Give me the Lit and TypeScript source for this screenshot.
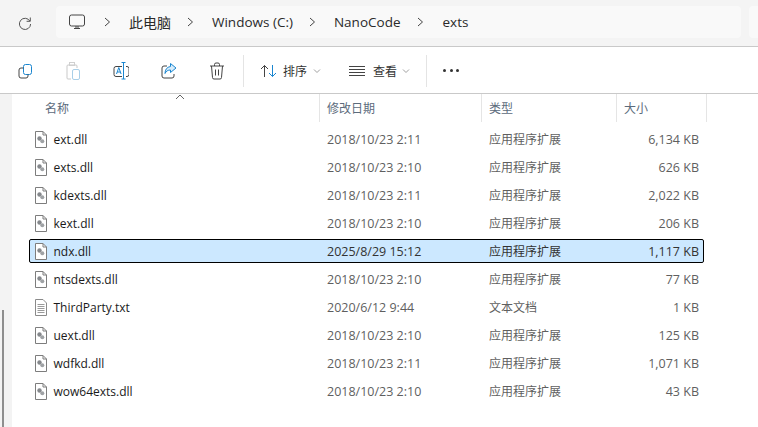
import { LitElement, html, css } from "lit";
import { customElement } from "lit/decorators.js";

const rows = [
  ["ext.dll", "2018/10/23 2:11", "应用程序扩展", "6,134 KB"],
  ["exts.dll", "2018/10/23 2:10", "应用程序扩展", "626 KB"],
  ["kdexts.dll", "2018/10/23 2:11", "应用程序扩展", "2,022 KB"],
  ["kext.dll", "2018/10/23 2:10", "应用程序扩展", "206 KB"],
  ["ndx.dll", "2025/8/29 15:12", "应用程序扩展", "1,117 KB"],
  ["ntsdexts.dll", "2018/10/23 2:10", "应用程序扩展", "77 KB"],
  ["ThirdParty.txt", "2020/6/12 9:44", "文本文档", "1 KB"],
  ["uext.dll", "2018/10/23 2:10", "应用程序扩展", "125 KB"],
  ["wdfkd.dll", "2018/10/23 2:11", "应用程序扩展", "1,071 KB"],
  ["wow64exts.dll", "2018/10/23 2:10", "应用程序扩展", "43 KB"],
];

const chev = html`<svg class="chev" width="8" height="12" viewBox="0 0 8 12"><path d="M2 2l4.500 4L2 10" fill="none" stroke="#444" stroke-width="1"/></svg>`;
const down = html`<svg class="down" width="8" height="6" viewBox="0 0 8 6"><path d="M1 1.500l3 3 3-3" fill="none" stroke="#a0a0a0" stroke-width="1"/></svg>`;

const dllIcon = html`<svg class="fi" width="14" height="17" viewBox="0 0 14 17">
  <path d="M1.500.5h7.500l3.500 3.500v12.500h-11z" fill="#fff" stroke="#7d7d7d"/>
  <path d="M9 .5v3.500h3.500" fill="none" stroke="#7d7d7d"/>
  <circle cx="5.500" cy="7.500" r="2.200" fill="#85888c"/><circle cx="8.300" cy="10.300" r="2" fill="#9fa2a5"/>
</svg>`;
const txtIcon = html`<svg class="fi" width="14" height="17" viewBox="0 0 14 17">
  <path d="M1.500.5h7.500l3.500 3.500v12.500h-11z" fill="#fff" stroke="#8a8a8a"/>
  <path d="M3.500 5.500h7M3.500 7.500h7M3.500 9.500h7M3.500 11.500h7M3.500 13.500h7" stroke="#9a9a9a"/>
</svg>`;

@customElement("app-root")
export class AppRoot extends LitElement {
  static styles = css`
    :host { display: block; width: 758px; height: 427px; overflow: hidden; background: #fff;
      font-family: "Open Sans", "Noto Sans CJK SC", sans-serif; font-size: 12.500px; color: #1b1b1b; }
    * { box-sizing: border-box; }
    .top { height: 47px; background: #f4f4f4; border-bottom: 1px solid #c9c9c9; display: flex; padding: 6px 0 0 18px; }
    .refresh { width: 38px; height: 32px; display: flex; align-items: center; padding-top: 2px; }
    .addr { width: 685px; height: 32px; background: #f9f9f9; border-radius: 4px; display: flex; align-items: center; padding-left: 13px; font-size: 13.500px; color: #2a2a2a; }
    .addr .pc { margin-right: 18px; }
    .addr .chev { margin-right: 18px; }
    .addr .seg { margin-right: 15px; }
    .addr .seg.wide { margin-right: 16px; }
    .addr .cjk { font-size: 14px; }
    .search { margin-left: 8px; flex: 1; height: 32px; background: #f9f9f9; border-radius: 4px 0 0 4px; }
    .bar { height: 47px; border-bottom: 1px solid #c9c9c9; display: flex; align-items: center; padding: 1px 0 0 17px; color: #333; }
    .ib { width: 16px; height: 18px; margin-right: 32px; display: flex; }
    .ib.last { margin-right: 18px; }
    .sep { width: 1px; height: 32px; background: #e4e4e4; margin-right: 16px; }
    .tb { display: flex; align-items: center; font-size: 12px; }
    .tb.sort-btn { margin-right: 28px; }
    .tb.view-btn { margin-right: 16px; }
    .tb .lbl { margin: 0 5px 0 8px; }
    .tb.sort-btn .lbl { margin: 0 6px; }
    .dots { display: flex; gap: 3.500px; }
    .dots i { width: 3px; height: 3px; border-radius: 50%; background: #333; }
    .main { display: flex; height: 333px; }
    .side { width: 12px; background: #f3f3f3; display: flex; flex-direction: column; justify-content: flex-end; padding-left: 2px; }
    .thumb { width: 2px; height: 117px; background: #8e8e8e; }
    .list { flex: 1; min-width: 0; }
    .head { height: 28px; display: grid; grid-template-columns: 308px 162px 135px 90px; position: relative; color: #5c6b7c; font-size: 12px; }
    .head div { border-right: 1px solid #e5e5e5; padding: 5px 0 0 7px; }
    .head div:first-child { padding-left: 33px; }
    .sort { position: absolute; left: 163px; top: 0; }
    .rows { display: flex; flex-direction: column; gap: 4px; padding: 5px 0 0 17px; }
    .row { height: 24px; width: 675px; display: grid; grid-template-columns: 291px 162px 135px 85px; align-items: center; border: 1px solid transparent; }
    .row.sel { background: #cce8ff; border-color: #000; border-radius: 2px; }
    .name { display: flex; align-items: center; gap: 5.500px; padding-left: 4px; color: #1a1a1a; font-size: 12px; }
    .fi { flex: none; }
    .date, .type, .size { color: #5f5f5f; }
    .sel .date, .sel .type, .sel .size { color: #333; }
    .date { padding-left: 6px; }
    .type { padding-left: 6px; font-size: 12px; }
    .size { text-align: right; padding-right: 4px; }
  `;

  render() {
    return html`
      <div class="top">
        <div class="refresh"><svg width="14" height="14" viewBox="0 0 14 14"><path d="M11.800 5A5.600 5.600 0 1 0 12.600 8" fill="none" stroke="#555" stroke-width="1"/><path d="M12.300 1.500V5.300H8.600" fill="none" stroke="#555" stroke-width="1"/></svg></div>
        <div class="addr">
          <svg class="pc" width="16" height="16" viewBox="0 0 16 16"><rect x=".5" y="1" width="15" height="11" rx="2" fill="none" stroke="#444"/><path d="M5 14.500h6M7 12v2M9 12v2" stroke="#444"/></svg>
          ${chev}<span class="seg cjk">此电脑</span>${chev}<span class="seg">Windows (C:)</span>${chev}<span class="seg wide">NanoCode</span>${chev}<span>exts</span>
        </div>
        <div class="search"></div>
      </div>
      <div class="bar">
        <div class="ib"><svg width="16" height="18" viewBox="0 0 16 18"><rect x="6.500" y="2.500" width="8" height="10" rx="2" fill="none" stroke="#1a86d0"/><path d="M6.500 6H4a2 2 0 0 0-2 2v6a2 2 0 0 0 2 2h5a2 2 0 0 0 2-2v-1.500" fill="none" stroke="#444"/></svg></div>
        <div class="ib"><svg width="16" height="18" viewBox="0 0 16 18"><path d="M3 3h8a1 1 0 0 1 1 1v2M3 3a1 1 0 0 0-1 1v12a1 1 0 0 0 1 1h3" fill="none" stroke="#c9c9c9"/><rect x="4.500" y=".5" width="5" height="3" fill="none" stroke="#d0d0d0"/><rect x="7.500" y="7.500" width="7" height="10" rx="1.500" fill="none" stroke="#a9cfe8"/></svg></div>
        <div class="ib"><svg width="16" height="18" viewBox="0 0 16 18"><path d="M9 4H3a2 2 0 0 0-2 2v6a2 2 0 0 0 2 2h6M13 4h1a2 2 0 0 1 2 2v6a2 2 0 0 1-2 2h-1" fill="none" stroke="#444" transform="translate(0 .5)"/><path d="M8.500.5h4M10.500.5v16.500M8.500 17h4" fill="none" stroke="#1a86d0"/><path d="M3.500 12l2.300-6.500 2.300 6.500M4.300 10h3" fill="none" stroke="#1a86d0"/></svg></div>
        <div class="ib"><svg width="16" height="18" viewBox="0 0 16 18"><path d="M6 4H3a2 2 0 0 0-2 2v8a2 2 0 0 0 2 2h8a2 2 0 0 0 2-2v-2" fill="none" stroke="#444"/><path d="M9.500 1.500l5.500 4.500-5.500 4.500V8C7 8 5 9 4 11.500c0-4 2-6.500 5.500-7z" fill="#d8ecfa" stroke="#1a86d0"/></svg></div>
        <div class="ib last"><svg width="16" height="18" viewBox="0 0 16 18"><path d="M1 4h14M5.500 4V2.500a1.500 1.500 0 0 1 1.500-1.500h2a1.500 1.500 0 0 1 1.500 1.500V4M2.500 4l1 11.500a1.500 1.500 0 0 0 1.500 1.500h6a1.500 1.500 0 0 0 1.500-1.500l1-11.500M6.500 7.500v6M9.500 7.500v6" fill="none" stroke="#444"/></svg></div>
        <div class="sep"></div>
        <div class="tb sort-btn">
          <svg width="17" height="14" viewBox="0 0 17 14"><path d="M4.500 13V1.500M1 5l3.500-3.500L8 5" fill="none" stroke="#444"/><path d="M12.500 1v11.500M9 9l3.500 3.500L16 9" fill="none" stroke="#1a86d0"/></svg>
          <span class="lbl">排序</span>${down}
        </div>
        <div class="tb view-btn">
          <svg width="16" height="10" viewBox="0 0 16 10"><path d="M0 .5h16M0 3.500h16M0 6.500h16M0 9.500h16" stroke="#444"/></svg>
          <span class="lbl">查看</span>${down}
        </div>
        <div class="sep"></div>
        <div class="dots"><i></i><i></i><i></i></div>
      </div>
      <div class="main">
        <div class="side"><div class="thumb"></div></div>
        <div class="list">
          <div class="head">
            <div>名称</div><div>修改日期</div><div>类型</div><div>大小</div>
            <svg class="sort" width="10" height="6" viewBox="0 0 10 6"><path d="M1 5l4-4 4 4" fill="none" stroke="#666"/></svg>
          </div>
          <div class="rows">
            ${rows.map((r) => html`<div class="row ${r[0] === "ndx.dll" ? "sel" : ""}">
              <div class="name">${r[0].endsWith(".txt") ? txtIcon : dllIcon}<span>${r[0]}</span></div>
              <div class="date">${r[1]}</div><div class="type">${r[2]}</div><div class="size">${r[3]}</div>
            </div>`)}
          </div>
        </div>
      </div>
    `;
  }
}
